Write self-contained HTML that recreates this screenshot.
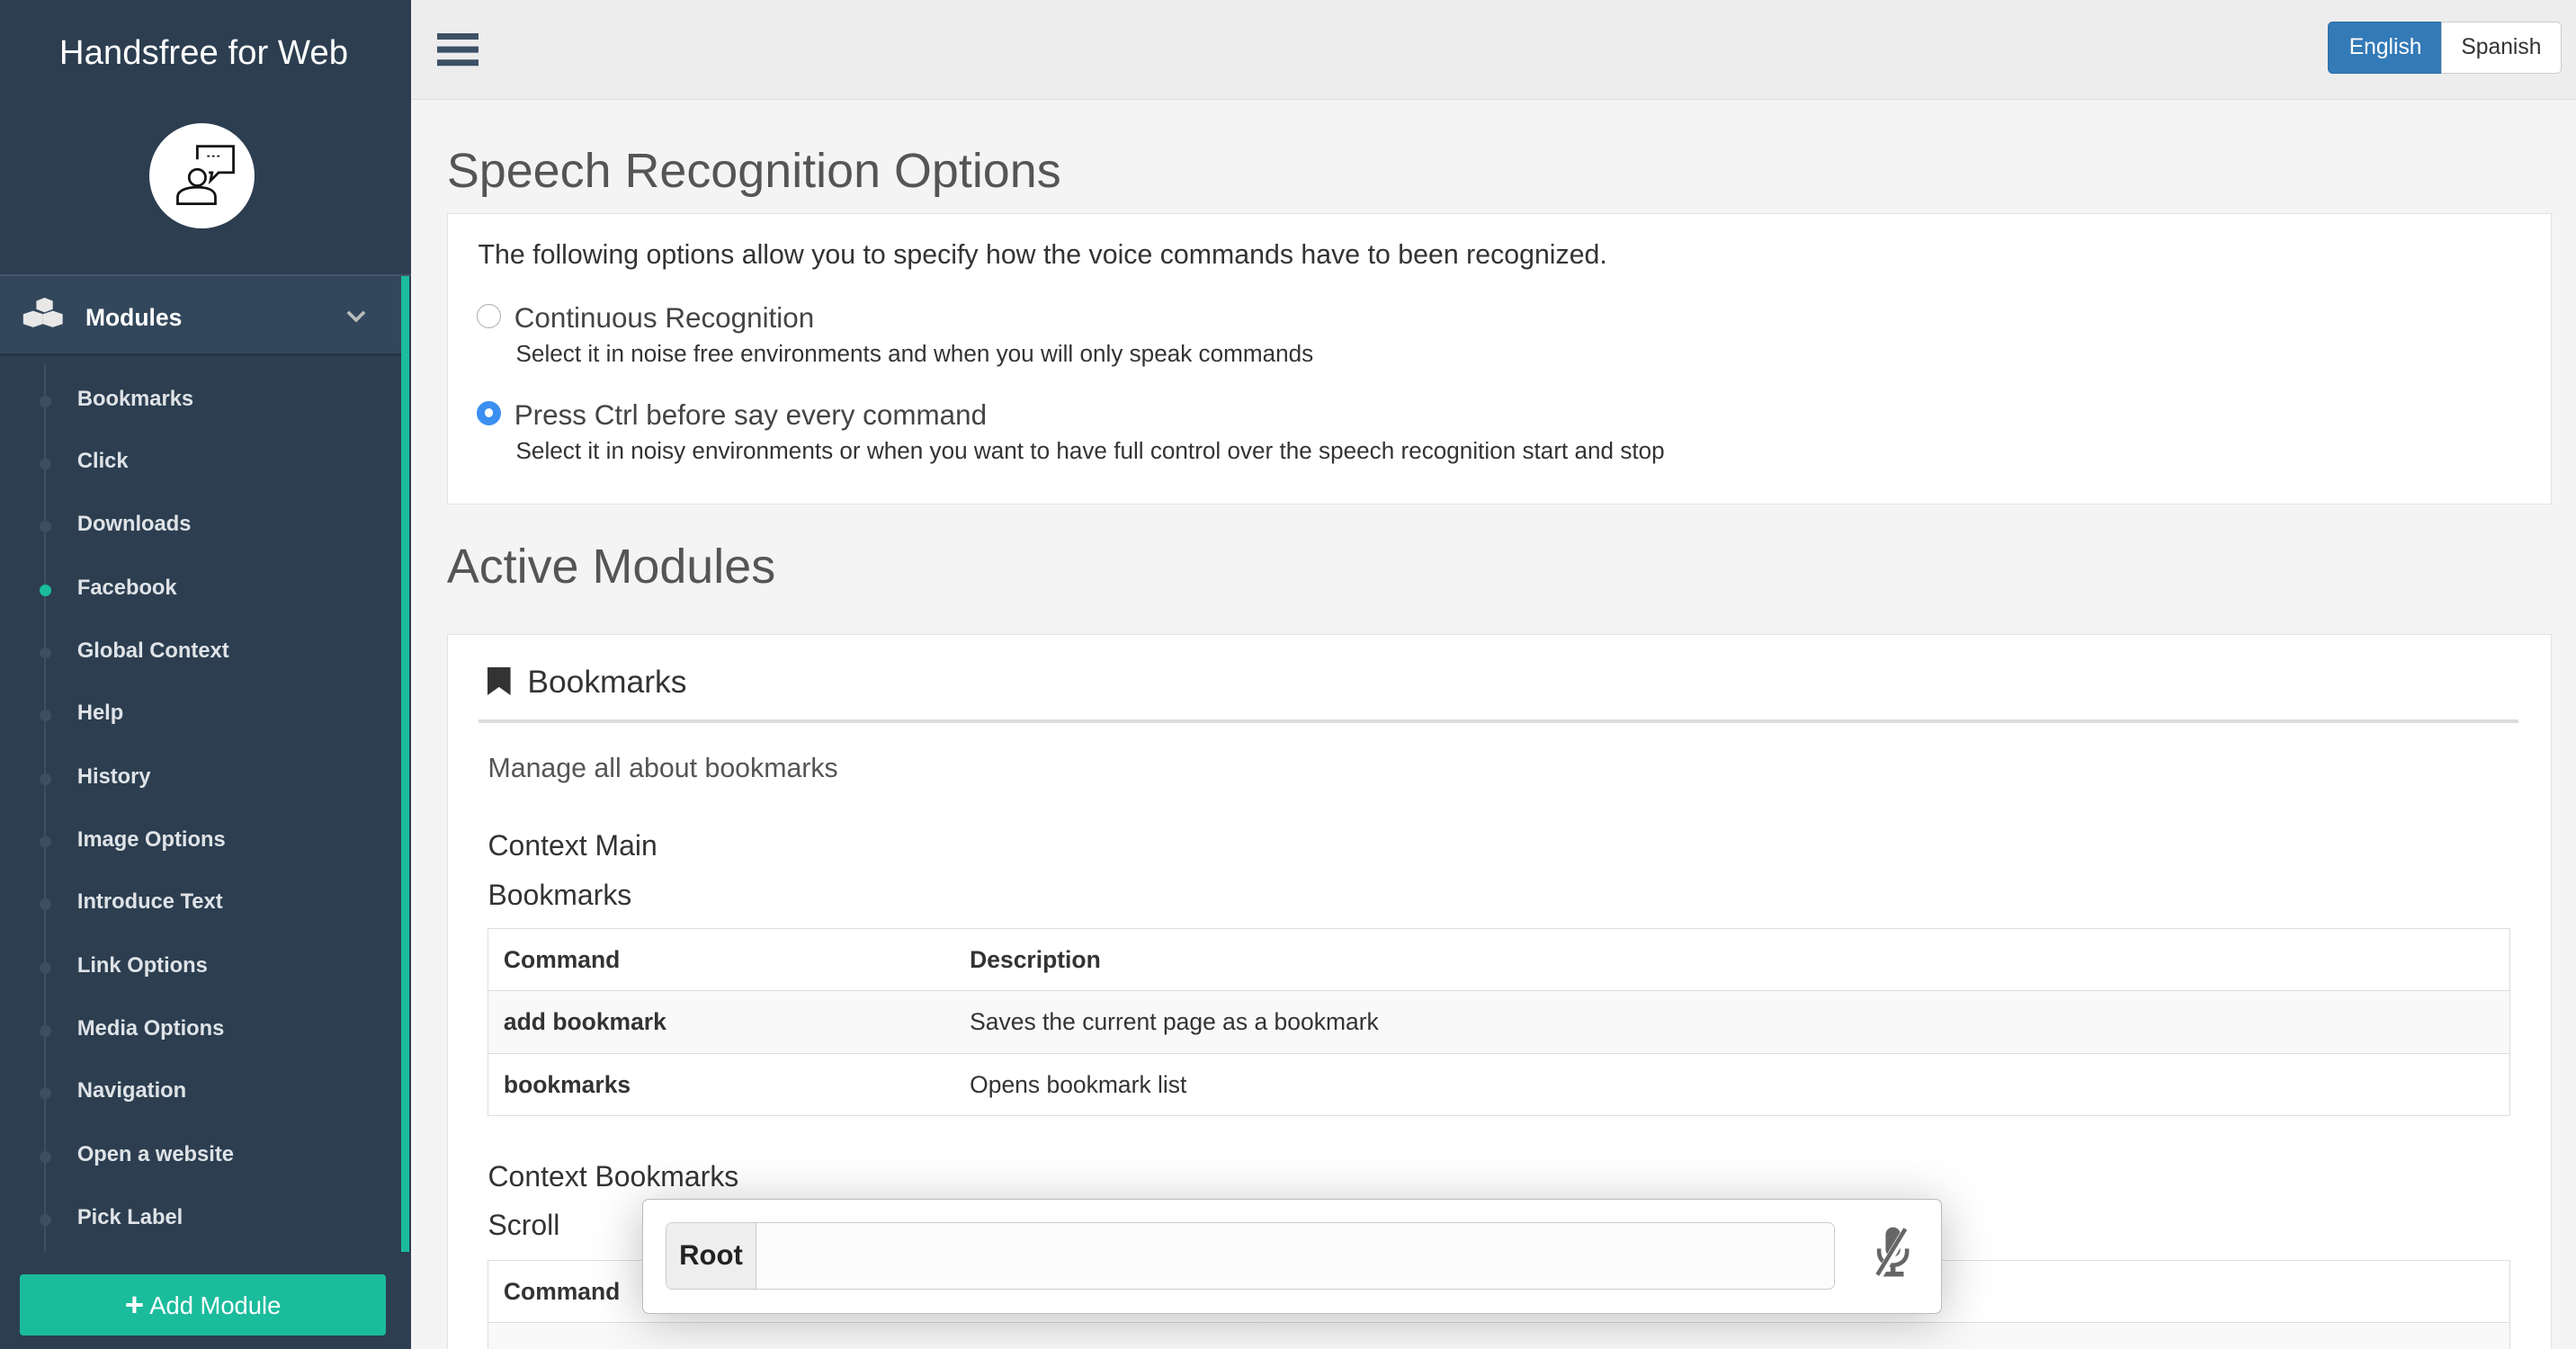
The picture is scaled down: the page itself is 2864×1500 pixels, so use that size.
<!DOCTYPE html>
<html><head><meta charset="utf-8"><style>
*{box-sizing:border-box;margin:0;padding:0}
html,body{width:2864px;height:1500px;overflow:hidden;background:#f4f4f4}
#w{zoom:1.82653;width:1568px;height:821px;position:relative;font-family:"Liberation Sans",sans-serif;overflow:hidden}
.a{position:absolute}
#sb{left:0;top:0;width:250px;height:821px;background:#2c3e50}
.it{position:absolute;left:47px;font-size:13px;font-weight:bold;color:#dfe3e7;margin-top:1px}
.dt{position:absolute;left:24px;width:7px;height:7px;border-radius:50%;background:#3c4e60;margin-top:1px}
td,th{border-top:1px solid #ddd;height:38px;padding:0 9px;font-size:14.5px;color:#333;text-align:left}
table{border-collapse:collapse;border:1px solid #ddd;width:100%}
</style></head><body><div id="w">
<div id="sb" class="a">
<div class="a" style="left:0;width:248px;top:20px;text-align:center;color:#fff;font-size:21px">Handsfree for Web</div>
<div class="a" style="left:91px;top:75px;width:64px;height:64px;border-radius:50%;background:#fff"></div>
<svg class="a" style="left:105px;top:87px" width="40" height="40" viewBox="0 0 40 40" fill="none" stroke="#111" stroke-width="1.5"><path d="M15 10V2h22v16h-9l-5 5 1-5h-2"/><circle cx="15" cy="21" r="5"/><path d="M3 37v-4c0-4 5-6 12-6s11 2 11 6v4z"/><path d="M21 8h1.5M24 8h1.5M27 8h1.5" stroke-width="1"/></svg>
<div class="a" style="left:0;top:167px;width:250px;height:1px;background:#44566a"></div>
<div class="a" style="left:0;top:168px;width:244px;height:49px;background:#32475b;border-bottom:2px solid #25344a"></div>
<svg class="a" style="left:13px;top:181px" width="26" height="24" viewBox="0 0 26 24" fill="#e8e8e8"><path d="M9 2l5-2 5 2v5l-5 2-5-2z"/><path d="M1 10l6-2 6 2v6l-6 2-6-2z"/><path d="M13 10l6-2 6 2v6l-6 2-6-2z"/></svg>
<div class="a" style="left:52px;top:185px;color:#fff;font-weight:bold;font-size:14.5px">Modules</div>
<svg class="a" style="left:211px;top:189px" width="12" height="8" viewBox="0 0 12 8"><path d="M1 1l5 5 5-5" fill="none" stroke="#bbb" stroke-width="2"/></svg>
<div class="a" style="left:244px;top:168px;width:5px;height:594px;background:#1abc9c"></div>
<div class="a" style="left:27px;top:222px;width:1px;height:540px;background:#3c4e60"></div>
<div class="dt" style="top:240px"></div><div class="it" style="top:235px">Bookmarks</div>
<div class="dt" style="top:278px"></div><div class="it" style="top:273px">Click</div>
<div class="dt" style="top:316px"></div><div class="it" style="top:311px">Downloads</div>
<div class="dt" style="top:355px;background:#1abc9c"></div><div class="it" style="top:350px">Facebook</div>
<div class="dt" style="top:393px"></div><div class="it" style="top:388px">Global Context</div>
<div class="dt" style="top:431px"></div><div class="it" style="top:426px">Help</div>
<div class="dt" style="top:470px"></div><div class="it" style="top:465px">History</div>
<div class="dt" style="top:508px"></div><div class="it" style="top:503px">Image Options</div>
<div class="dt" style="top:546px"></div><div class="it" style="top:541px">Introduce Text</div>
<div class="dt" style="top:585px"></div><div class="it" style="top:580px">Link Options</div>
<div class="dt" style="top:623px"></div><div class="it" style="top:618px">Media Options</div>
<div class="dt" style="top:661px"></div><div class="it" style="top:656px">Navigation</div>
<div class="dt" style="top:700px"></div><div class="it" style="top:695px">Open a website</div>
<div class="dt" style="top:738px"></div><div class="it" style="top:733px">Pick Label</div>
<div class="a" style="left:12px;top:776px;width:223px;height:37px;background:#1abc9c;border-radius:2px;color:#fff;font-size:15px;text-align:center;line-height:37px"><b style="font-size:20px;vertical-align:-1px">+</b> Add Module</div>
</div>
<div class="a" style="left:250px;top:0;width:1318px;height:61px;background:#ededed;border-bottom:1px solid #ddd"></div>
<div class="a" style="left:266px;top:20px;width:25px;height:4px;background:#3d5166;box-shadow:0 8px #3d5166,0 16px #3d5166"></div>
<div class="a" style="left:1417px;top:13px;width:70px;height:32px;background:#337ab7;border:1px solid #2e6da4;border-radius:3px 0 0 3px;color:#fff;font-size:13.5px;text-align:center;line-height:31px">English</div>
<div class="a" style="left:1486px;top:13px;width:73px;height:32px;background:#fff;border:1px solid #ccc;border-radius:0 3px 3px 0;color:#333;font-size:13.5px;text-align:center;line-height:31px">Spanish</div>
<div class="a" style="left:272px;top:87px;font-size:29.5px;color:#555">Speech Recognition Options</div>
<div class="a" style="left:272px;top:130px;width:1281px;height:177px;background:#fff;border:1px solid #e3e3e3"></div>
<div class="a" style="left:291px;top:146px;font-size:16.6px;color:#333">The following options allow you to specify how the voice commands have to been recognized.</div>
<div class="a" style="left:290px;top:185px;width:15px;height:15px;border-radius:50%;border:1px solid #aaa"></div>
<div class="a" style="left:313px;top:184px;font-size:17.2px;color:#444">Continuous Recognition</div>
<div class="a" style="left:314px;top:207px;font-size:14.3px;color:#333">Select it in noise free environments and when you will only speak commands</div>
<div class="a" style="left:290px;top:244px;width:15px;height:15px;border-radius:50%;background:#3b8ff0;border:4px solid #3b8ff0"><div style="width:5px;height:5px;border-radius:50%;background:#fff;margin:1px"></div></div>
<div class="a" style="left:313px;top:243px;font-size:17.2px;color:#444">Press Ctrl before say every command</div>
<div class="a" style="left:314px;top:266px;font-size:14.3px;color:#333">Select it in noisy environments or when you want to have full control over the speech recognition start and stop</div>
<div class="a" style="left:272px;top:328px;font-size:29.5px;color:#555">Active Modules</div>
<div class="a" style="left:272px;top:386px;width:1281px;height:440px;background:#fff;border:1px solid #e3e3e3"></div>
<svg class="a" style="left:297px;top:406px" width="14" height="17" viewBox="0 0 14 17"><path d="M0 0h14v17l-7-5-7 5z" fill="#333"/></svg>
<div class="a" style="left:321px;top:404px;font-size:19.4px;color:#333">Bookmarks</div>
<div class="a" style="left:291px;top:438px;width:1242px;height:2px;background:#ddd"></div>
<div class="a" style="left:297px;top:459px;font-size:16.6px;color:#555">Manage all about bookmarks</div>
<div class="a" style="left:297px;top:505px;font-size:17.5px;color:#333">Context Main</div>
<div class="a" style="left:297px;top:535px;font-size:17.5px;color:#333">Bookmarks</div>
<div class="a" style="left:297px;top:565px;width:1231px"><table>
<tr><th style="width:284px">Command</th><th>Description</th></tr>
<tr style="background:#f9f9f9"><td><b>add bookmark</b></td><td>Saves the current page as a bookmark</td></tr>
<tr><td><b>bookmarks</b></td><td>Opens bookmark list</td></tr></table></div>
<div class="a" style="left:297px;top:706px;font-size:17.5px;color:#333">Context Bookmarks</div>
<div class="a" style="left:297px;top:736px;font-size:17.5px;color:#333">Scroll</div>
<div class="a" style="left:297px;top:767px;width:1231px"><table>
<tr><th style="width:284px">Command</th><th>Description</th></tr>
<tr style="background:#f9f9f9"><td></td><td></td></tr></table></div>
<div class="a" style="left:391px;top:730px;width:791px;height:70px;background:#fff;border:1px solid #bbb;border-radius:4px;box-shadow:0 4px 30px rgba(0,0,0,.25)"></div>
<div class="a" style="left:405px;top:744px;width:712px;height:41px;border:1px solid #ccc;border-radius:4px;background:#fcfcfc;overflow:hidden"><div style="width:55px;height:100%;background:#eee;border-right:1px solid #ccc;font-weight:bold;font-size:17px;color:#222;text-align:center;line-height:39px">Root</div></div>
<svg class="a" style="left:1139px;top:745px" width="26" height="34" viewBox="0 0 26 34" fill="#666"><rect x="9" y="2" width="9" height="18" rx="4.5"/><path d="M5 15v2c0 5 4 8 8.5 8s8.5-3 8.5-8v-2" fill="none" stroke="#666" stroke-width="2.5"/><rect x="12" y="25" width="3" height="5"/><rect x="7" y="29" width="13" height="3"/><path d="M4 33L22 3" stroke="#fff" stroke-width="5"/><path d="M4 31L21 3" stroke="#666" stroke-width="2.5"/></svg>
</div></body></html>
